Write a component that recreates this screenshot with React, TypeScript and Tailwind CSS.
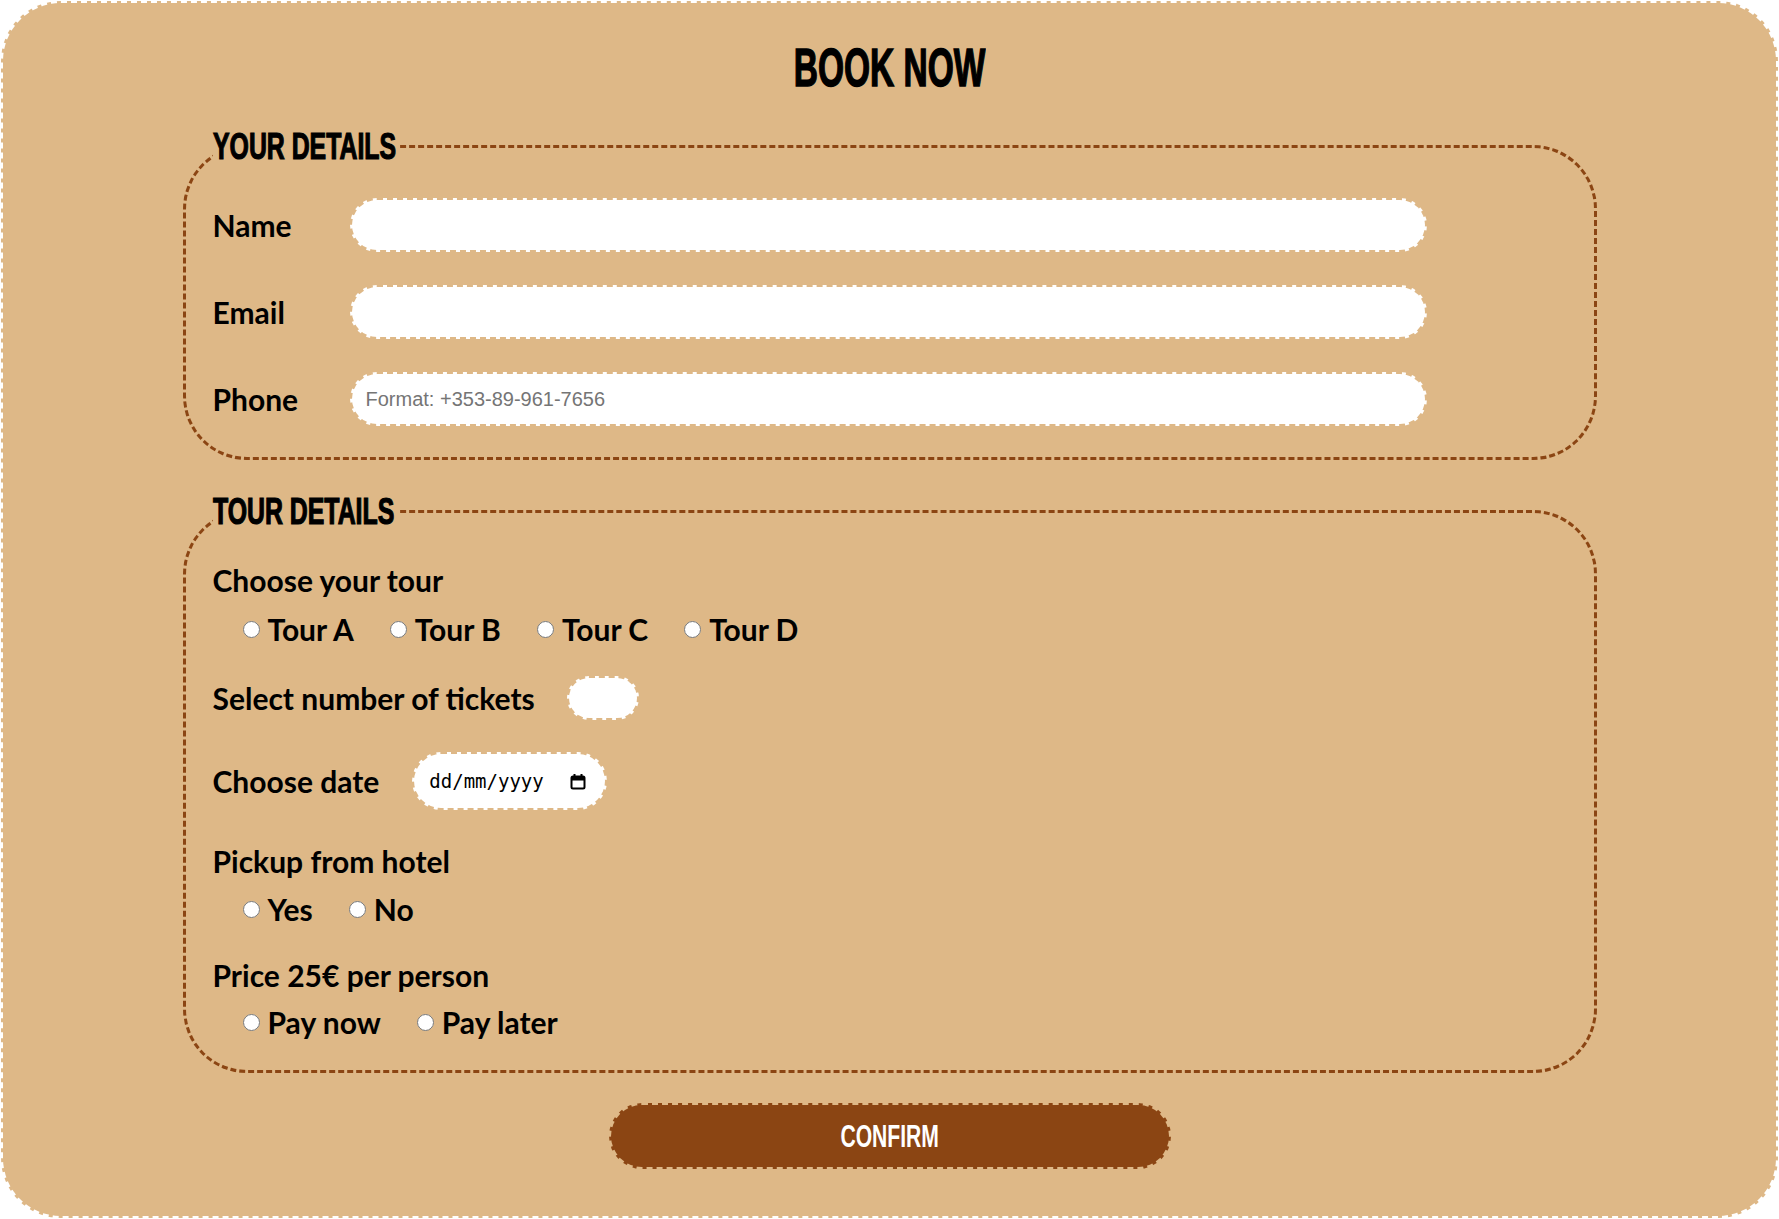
import React from "react";

const tours = ["Tour A", "Tour B", "Tour C", "Tour D"];

const RadioRow = ({ name, options }: { name: string; options: string[] }) => (
  <div className="flex items-center gap-[36px] pl-[30px]">
    {options.map((o) => (
      <label key={o} className="flex items-center">
        <input type="radio" name={name} className="m-0 mr-2 h-[17px] w-[17px]" />
        <span>{o}</span>
      </label>
    ))}
  </div>
);

const Legend = ({ text }: { text: string }) => (
  <legend className="w-[185px] whitespace-nowrap p-0 font-['Liberation_Sans',sans-serif] text-[36px] font-bold leading-[43px] text-black [-webkit-text-stroke:1.2px_black]">
    <span className="inline-block origin-left scale-x-[0.69]">{text}</span>
  </legend>
);

const CalendarIcon = () => (
  <svg width="16" height="17" viewBox="0 0 16 17">
    <path d="M4.5 1v3M11.5 1v3" stroke="#000" strokeWidth="2" />
    <rect x="1.5" y="3.5" width="13" height="12" rx="1.5" fill="none" stroke="#000" strokeWidth="2" />
    <rect x="1.5" y="3.5" width="13" height="4" fill="#000" />
  </svg>
);

const inputCls =
  "h-[54px] w-[1077px] rounded-full border-2 border-dashed border-[#deb887] bg-white pl-[14px] font-['Liberation_Sans',sans-serif] text-[20px] font-normal text-black outline-none placeholder:text-[#757575]";

const App = () => {
  return (
    <div className="min-h-screen bg-white p-px">
      <form className="flex h-[1217px] flex-col items-center rounded-[60px] border-2 border-dashed border-white bg-[#deb887] font-['Lato',sans-serif] text-[30px] font-bold leading-[36px] text-black">
        <h1 className="mt-[37px] w-full text-center font-['Liberation_Sans',sans-serif] text-[54px] font-bold leading-[54px] [-webkit-text-stroke:1.5px_black]">
          <span className="inline-block scale-x-[0.62]">BOOK NOW</span>
        </h1>

        <fieldset className="mt-[31px] w-[1414px] rounded-[64px] border-[3px] border-dashed border-[#8b4513] pb-[31px] pl-[27px] pr-[27px] pt-[30px]">
          <Legend text="YOUR DETAILS" />
          <div className="grid grid-cols-[137px_1077px] items-center gap-y-[33px]">
            <label>Name</label>
            <input type="text" className={inputCls} />
            <label>Email</label>
            <input type="email" className={inputCls} />
            <label>Phone</label>
            <input type="tel" placeholder="Format: +353-89-961-7656" className={inputCls} />
          </div>
        </fieldset>

        <fieldset className="mt-[30px] w-[1414px] rounded-[64px] border-[3px] border-dashed border-[#8b4513] pb-[30px] pl-[27px] pr-[27px] pt-[29px]">
          <Legend text="TOUR DETAILS" />
          <p>Choose your tour</p>
          <div className="mt-[13px]">
            <RadioRow name="tour" options={tours} />
          </div>

          <div className="mt-[29px] flex items-center">
            <label>Select number of tickets</label>
            <input
              type="number"
              className="ml-8 h-[44px] w-[72px] rounded-full border-2 border-dashed border-[#deb887] bg-white px-3 text-[20px] font-normal outline-none"
            />
          </div>

          <div className="mt-[32px] flex items-center">
            <label>Choose date</label>
            <div className="ml-[33px] flex h-[58px] w-[195px] items-center justify-between rounded-full border-2 border-dashed border-[#deb887] bg-white pl-[15px] pr-[19px]">
              <input
                type="text"
                placeholder="dd/mm/yyyy"
                className="w-[118px] bg-transparent font-['DejaVu_Sans_Mono',monospace] text-[19px] font-normal text-black outline-none placeholder:text-black"
              />
              <CalendarIcon />
            </div>
          </div>

          <p className="mt-[33px]">Pickup from hotel</p>
          <div className="mt-[12px]">
            <RadioRow name="pickup" options={["Yes", "No"]} />
          </div>

          <p className="mt-[30px]">Price 25€ per person</p>
          <div className="mt-[11px]">
            <RadioRow name="pay" options={["Pay now", "Pay later"]} />
          </div>
        </fieldset>

        <button
          type="button"
          className="mt-[30px] h-[66px] w-[562px] rounded-full border-2 border-dashed border-[#deb887] bg-[#8b4513] font-['Liberation_Sans',sans-serif] text-[32px] font-bold leading-none text-white"
        >
          <span className="inline-block scale-x-[0.66]">CONFIRM</span>
        </button>
      </form>
    </div>
  );
};

export default App;
